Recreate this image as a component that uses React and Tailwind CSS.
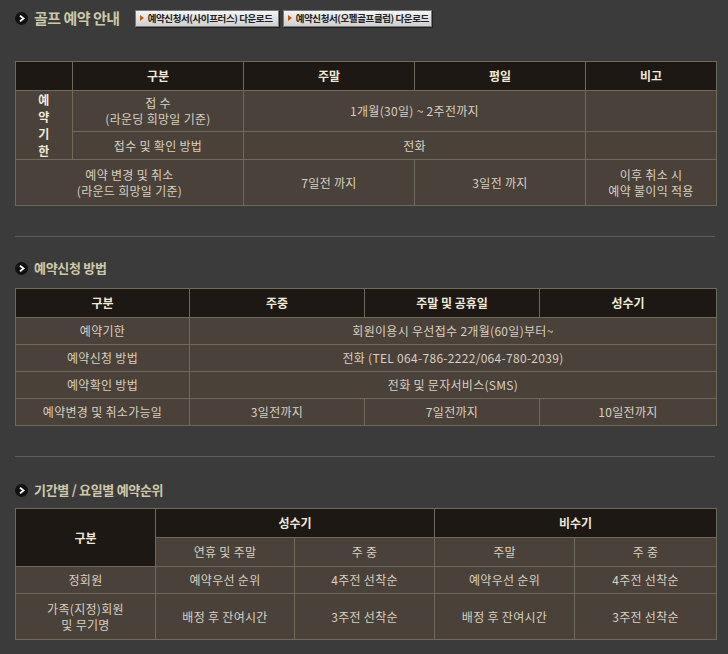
import React from 'react';

const font = { fontFamily: '"Noto Sans CJK KR", "Liberation Sans", sans-serif' };

const Bullet = ({ size = 'w-[13px] h-[13px]' }) => (
  <span className={`${size} rounded-full bg-[#111] flex items-center justify-center shrink-0`}>
    <svg width="6" height="7" viewBox="0 0 6 7">
      <path d="M1 0.8 L4.6 3.5 L1 6.2" fill="none" stroke="#fff" strokeWidth="1.8" />
    </svg>
  </span>
);

const SectionTitle = ({ children }) => (
  <div className="flex items-center gap-[6px] h-[18px]">
    <Bullet />
    <span className="text-[13px] font-bold text-[#cfc9aa] tracking-[-0.3px]">{children}</span>
  </div>
);

const DownloadButton = ({ label, width }) => (
  <button
    className={`${width} h-[17px] flex items-center gap-[4px] pl-[4px] border border-[#7a7a7a] bg-gradient-to-b from-[#f4f4f4] to-[#cfcfcf] text-[9.5px] font-bold text-[#222] tracking-[-0.4px] shadow-[1px_1px_0_#222]`}
  >
    <svg width="4" height="6" viewBox="0 0 4 6">
      <path d="M0 0 L4 3 L0 6 Z" fill="#c25a0a" />
    </svg>
    {label}
  </button>
);

const Th = ({ children, className = '', ...rest }) => (
  <th
    {...rest}
    className={`border border-[#6e6a5a] bg-[#1d1813] text-[#f1ead9] font-bold text-[12px] text-center align-middle ${className}`}
  >
    {children}
  </th>
);

const Td = ({ children, className = '', ...rest }) => (
  <td
    {...rest}
    className={`border border-[#6e6a5a] bg-[#4a413a] text-[#d8d0c0] text-[12px] leading-[16px] tracking-[0.3px] text-center align-middle ${className}`}
  >
    {children}
  </td>
);

const Separator = () => <div className="h-px bg-[#5e5e5e] w-[700px]" />;

export default function App() {
  return (
    <div className="w-[728px] h-[654px] bg-[#3b3b3b] overflow-hidden" style={font}>
      <div className="pl-[15px] pt-[9px]">
        {/* 상단 제목 */}
        <div className="flex items-center h-[18px]">
          <Bullet />
          <span className="ml-[6px] text-[15px] font-bold text-[#cdc8a6] tracking-[-0.5px]">골프 예약 안내</span>
          <div className="ml-[15px] flex gap-[4px]">
            <DownloadButton label="예약신청서(사이프러스) 다운로드" width="w-[144px]" />
            <DownloadButton label="예약신청서(오펠골프클럽) 다운로드" width="w-[149px]" />
          </div>
        </div>

        {/* 표 1 */}
        <table className="mt-[34px] w-[701px] table-fixed border-collapse">
          <colgroup>
            <col className="w-[57px]" />
            <col className="w-[171px]" />
            <col className="w-[171px]" />
            <col className="w-[171px]" />
            <col className="w-[131px]" />
          </colgroup>
          <thead>
            <tr className="h-[29px]">
              <Th></Th>
              <Th>구분</Th>
              <Th>주말</Th>
              <Th>평일</Th>
              <Th>비고</Th>
            </tr>
          </thead>
          <tbody>
            <tr className="h-[41px]">
              <Td rowSpan={2} className="font-bold text-[#f1ead9] leading-[17px]">
                예<br />약<br />기<br />한
              </Td>
              <Td>접 수<br />(라운딩 희망일 기준)</Td>
              <Td colSpan={2}>1개월(30일) ~ 2주전까지</Td>
              <Td></Td>
            </tr>
            <tr className="h-[28px]">
              <Td>접수 및 확인 방법</Td>
              <Td colSpan={2}>전화</Td>
              <Td></Td>
            </tr>
            <tr className="h-[46px]">
              <Td colSpan={2}>예약 변경 및 취소<br />(라운드 희망일 기준)</Td>
              <Td>7일전 까지</Td>
              <Td>3일전 까지</Td>
              <Td>이후 취소 시<br />예약 불이익 적용</Td>
            </tr>
          </tbody>
        </table>

        <div className="mt-[30px]">
          <Separator />
        </div>

        {/* 예약신청 방법 */}
        <div className="mt-[22px]">
          <SectionTitle>예약신청 방법</SectionTitle>
        </div>
        <table className="mt-[11px] w-[701px] table-fixed border-collapse">
          <colgroup>
            <col className="w-[174px]" />
            <col className="w-[175px]" />
            <col className="w-[175px]" />
            <col className="w-[177px]" />
          </colgroup>
          <thead>
            <tr className="h-[29px]">
              <Th>구분</Th>
              <Th>주중</Th>
              <Th>주말 및 공휴일</Th>
              <Th>성수기</Th>
            </tr>
          </thead>
          <tbody>
            <tr className="h-[27px]">
              <Td>예약기한</Td>
              <Td colSpan={3}>회원이용시 우선접수 2개월(60일)부터~</Td>
            </tr>
            <tr className="h-[27px]">
              <Td>예약신청 방법</Td>
              <Td colSpan={3}>전화 (TEL 064-786-2222/064-780-2039)</Td>
            </tr>
            <tr className="h-[27px]">
              <Td>예약확인 방법</Td>
              <Td colSpan={3}>전화 및 문자서비스(SMS)</Td>
            </tr>
            <tr className="h-[27px]">
              <Td>예약변경 및 취소가능일</Td>
              <Td>3일전까지</Td>
              <Td>7일전까지</Td>
              <Td>10일전까지</Td>
            </tr>
          </tbody>
        </table>

        <div className="mt-[30px]">
          <Separator />
        </div>

        {/* 기간별 / 요일별 예약순위 */}
        <div className="mt-[24px]">
          <SectionTitle>기간별 / 요일별 예약순위</SectionTitle>
        </div>
        <table className="mt-[9px] w-[701px] table-fixed border-collapse">
          <colgroup>
            <col className="w-[140px]" />
            <col className="w-[139px]" />
            <col className="w-[140px]" />
            <col className="w-[140px]" />
            <col className="w-[142px]" />
          </colgroup>
          <thead>
            <tr className="h-[29px]">
              <Th rowSpan={2}>구분</Th>
              <Th colSpan={2}>성수기</Th>
              <Th colSpan={2}>비수기</Th>
            </tr>
            <tr className="h-[29px]">
              <Td className="bg-[#3a342f]">연휴 및 주말</Td>
              <Td className="bg-[#3a342f]">주 중</Td>
              <Td className="bg-[#3a342f]">주말</Td>
              <Td className="bg-[#3a342f]">주 중</Td>
            </tr>
          </thead>
          <tbody>
            <tr className="h-[27px]">
              <Td>정회원</Td>
              <Td>예약우선 순위</Td>
              <Td>4주전 선착순</Td>
              <Td>예약우선 순위</Td>
              <Td>4주전 선착순</Td>
            </tr>
            <tr className="h-[46px]">
              <Td>가족(지정)회원<br />및 무기명</Td>
              <Td>배정 후 잔여시간</Td>
              <Td>3주전 선착순</Td>
              <Td>배정 후 잔여시간</Td>
              <Td>3주전 선착순</Td>
            </tr>
          </tbody>
        </table>
      </div>
    </div>
  );
}
